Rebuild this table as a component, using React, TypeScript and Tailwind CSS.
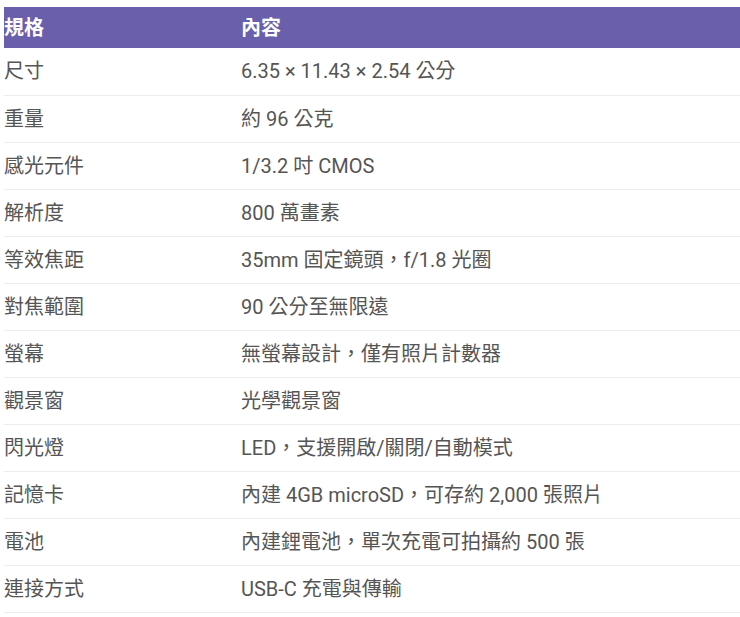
const specs: [string, string][] = [
  ["尺寸", "6.35 × 11.43 × 2.54 公分"],
  ["重量", "約 96 公克"],
  ["感光元件", "1/3.2 吋 CMOS"],
  ["解析度", "800 萬畫素"],
  ["等效焦距", "35mm 固定鏡頭，f/1.8 光圈"],
  ["對焦範圍", "90 公分至無限遠"],
  ["螢幕", "無螢幕設計，僅有照片計數器"],
  ["觀景窗", "光學觀景窗"],
  ["閃光燈", "LED，支援開啟/關閉/自動模式"],
  ["記憶卡", "內建 4GB microSD，可存約 2,000 張照片"],
  ["電池", "內建鋰電池，單次充電可拍攝約 500 張"],
  ["連接方式", "USB-C 充電與傳輸"],
];

export default function App() {
  return (
    <div
      className="bg-white min-h-screen pl-1 pt-[7px]"
      style={{ fontFamily: 'Roboto, "Noto Sans CJK TC", sans-serif' }}
    >
      <table className="w-[736px] border-collapse text-[20px] text-left">
        <thead>
          <tr className="bg-[#6a5fab] text-white h-[41px]">
            <th className="w-[237px] font-bold p-0 align-middle">規格</th>
            <th className="font-bold p-0 align-middle">內容</th>
          </tr>
        </thead>
        <tbody className="text-[#555555]">
          {specs.map(([name, value], i) => (
            <tr key={i} className="h-[47px] border-b border-[#ececec]">
              <td className="p-0 align-middle">{name}</td>
              <td className="p-0 align-middle">{value}</td>
            </tr>
          ))}
        </tbody>
      </table>
    </div>
  );
}
